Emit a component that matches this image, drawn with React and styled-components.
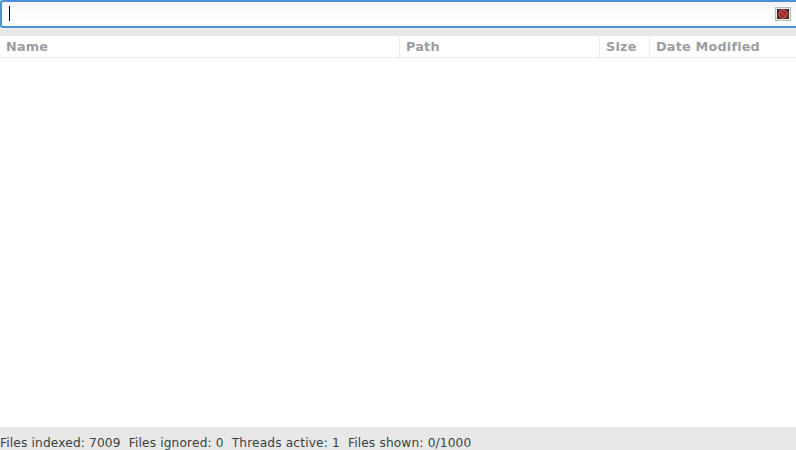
import React from "react";
import styled, { createGlobalStyle } from "styled-components";

const Global = createGlobalStyle`
  *{box-sizing:border-box}
  html,body{margin:0;overflow:hidden}
`;
const Window = styled.div`
  width:796px;height:450px;display:flex;flex-direction:column;background:#e8e8e8;
  font-family:"DejaVu Sans",sans-serif;overflow:hidden;
`;
const SearchBar = styled.div`
  width:800px;height:28px;flex:none;display:flex;align-items:center;
  border:2px solid #4a90d9;border-radius:3px;box-shadow:0 1px #f1f1f1;
  background:linear-gradient(#f5f5f5,#fafafa 6px,#fff);padding:0 7px 0 7px;
`;
const Caret = styled.span`width:1px;height:15px;margin-bottom:1px;background:#000;`;
const ClearButton = styled.button`
  margin:0 0 0 auto;padding:0;border:0;background:none;width:16px;height:14px;display:flex;
`;
const List = styled.main`flex:1;margin-top:8px;background:#fff;`;
const Header = styled.div`
  height:22px;display:grid;grid-template-columns:400px 200px 50px 146px;
  border-bottom:1px solid #ededed;
`;
const Column = styled.div`
  padding-left:6px;line-height:21px;font-size:12.8px;letter-spacing:.2px;font-weight:bold;color:#9b9e9e;
  border-right:1px solid #ededed;white-space:nowrap;
  &:last-child{border-right:0}
`;
const Status = styled.footer`
  height:23px;padding-top:8px;display:flex;gap:8px;font-size:12.2px;letter-spacing:.15px;
  line-height:16px;color:#3a4042;white-space:nowrap;
`;

export default function App() {
  return (
    <Window>
      <Global />
      <SearchBar>
        <Caret />
        <ClearButton aria-label="Clear">
          <svg width="16" height="14" viewBox="0 0 16 14">
            <defs>
              <radialGradient id="tile">
                <stop offset="0" stopColor="#9d2d30" />
                <stop offset=".7" stopColor="#71282b" />
                <stop offset="1" stopColor="#303334" />
              </radialGradient>
            </defs>
            <rect x="0.5" y="0.5" width="15" height="13" fill="#eee" stroke="#bababa" />
            <rect x="2" y="2" width="12" height="10" fill="url(#tile)" />
            <circle cx="8" cy="7" r="4" fill="#8c3034" stroke="#d94448" strokeWidth="1.4" />
            <path d="M5.4 4.4L10.6 9.6" stroke="#d94448" strokeWidth="1.2" />
          </svg>
        </ClearButton>
      </SearchBar>
      <List>
        <Header>
          {["Name", "Path", "Size", "Date Modified"].map((c) => <Column key={c}>{c}</Column>)}
        </Header>
      </List>
      <Status>
        {["Files indexed: 7009", "Files ignored: 0", "Threads active: 1", "Files shown: 0/1000"].map((s) => <span key={s}>{s}</span>)}
      </Status>
    </Window>
  );
}
